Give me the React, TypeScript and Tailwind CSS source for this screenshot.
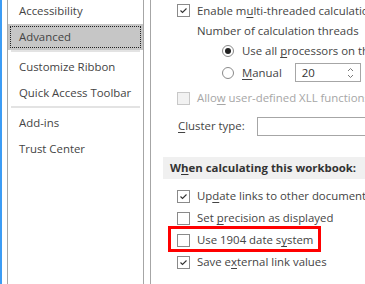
import React from "react";

const U = ({ children }: { children: React.ReactNode }) => (
  <span className="underline decoration-1 underline-offset-[2px]">{children}</span>
);

function CheckBox({ checked, disabled }: { checked?: boolean; disabled?: boolean }) {
  return (
    <div
      className={
        "w-[13px] h-[13px] shrink-0 border flex items-center justify-center " +
        (disabled ? "border-[#c8c8c8] bg-[#f2f2f2]" : "border-[#8a8a8a] bg-white")
      }
    >
      {checked && (
        <svg width="11" height="11" viewBox="0 0 11 11">
          <path d="M2.5 5.5 L4.5 7.5 L8.5 3.5" fill="none" stroke="#333" strokeWidth="1.1" />
        </svg>
      )}
    </div>
  );
}

function Radio({ checked }: { checked?: boolean }) {
  return (
    <div className="w-[12px] h-[12px] shrink-0 rounded-full border border-[#8a8a8a] bg-white flex items-center justify-center">
      {checked && <div className="w-[6px] h-[6px] rounded-full bg-[#222]" />}
    </div>
  );
}

function SideItem({ label, selected }: { label: string; selected?: boolean }) {
  if (selected) {
    return (
      <div className="h-[26px] bg-[#c6c6c6] p-[2px]">
        <div className="h-full border border-dotted border-[#222] flex items-center pl-[8px]">{label}</div>
      </div>
    );
  }
  return <div className="h-[26px] flex items-center pl-[11px]">{label}</div>;
}

function Sep() {
  return (
    <div className="h-[4px] px-[3px]">
      <div className="h-[2px] bg-[#e3e3e3]" />
    </div>
  );
}

function CheckRow({
  checked,
  children,
  disabled,
}: {
  checked?: boolean;
  children: React.ReactNode;
  disabled?: boolean;
}) {
  return (
    <div className={"h-[22px] flex items-center gap-[7px] pl-[26px] " + (disabled ? "text-[#a6a6a6]" : "")}>
      <CheckBox checked={checked} disabled={disabled} />
      <span>{children}</span>
    </div>
  );
}

export default function App() {
  return (
    <div className="w-[365px] h-[284px] overflow-hidden bg-white flex font-['Open_Sans',sans-serif] text-[11.4px] text-[#444] whitespace-nowrap leading-none">
      <div className="w-[2px] shrink-0 bg-[#3c9cf5]" />
      <div className="w-[5px] shrink-0" />
      <div className="w-[137px] shrink-0 border-x border-[#a6a6a6]">
        <div className="-mt-[2px]">
          <SideItem label="Accessibility" />
          <SideItem label="Advanced" selected />
          <Sep />
          <SideItem label="Customize Ribbon" />
          <SideItem label="Quick Access Toolbar" />
          <Sep />
          <SideItem label="Add-ins" />
          <SideItem label="Trust Center" />
        </div>
      </div>
      <div className="w-[6px] shrink-0" />
      <div className="flex-1 border-l border-[#a6a6a6] overflow-hidden">
        <div className="h-[21px] flex items-center gap-[7px] pl-[26px]">
          <CheckBox checked />
          <span>
            Enable m<U>u</U>lti-threaded calculation
          </span>
        </div>
        <div className="h-[20px] flex items-center pl-[46px]">Number of calculation threads</div>
        <div className="h-[20px] flex items-center gap-[8px] pl-[71px]">
          <Radio checked />
          <span>
            Use all <U>p</U>rocessors on this computer: 20
          </span>
        </div>
        <div className="h-[23px] flex items-center pl-[71px]">
          <Radio />
          <span className="ml-[8px]">
            <U>M</U>anual
          </span>
          <div className="ml-[13px] w-[66px] h-[19px] border border-[#a6a6a6] flex items-center justify-between pl-[6px] pr-[6px] text-[#333]">
            <span>20</span>
            <svg width="7" height="12" viewBox="0 0 7 12">
              <path d="M1 4 L3.5 1.5 L6 4" fill="none" stroke="#777" strokeWidth="1" />
              <path d="M1 8 L3.5 10.5 L6 8" fill="none" stroke="#777" strokeWidth="1" />
            </svg>
          </div>
        </div>
        <div className="h-[28px] flex items-center">
          <div className="w-full">
            <CheckRow disabled>
              Allo<U>w</U> user-defined XLL functions to run on a compute cluster
            </CheckRow>
          </div>
        </div>
        <div className="h-[28px] flex items-center pl-[27px]">
          <span className="w-[79px]">
            <U>C</U>luster type:
          </span>
          <div className="flex-1 h-[19px] border border-[#a6a6a6] border-r-0" />
        </div>
        <div className="mt-[17px] ml-[12px] h-[22px] bg-[#f0f0f0] flex items-center pl-[7px] font-bold text-[#333]">
          <span>
            W<U>h</U>en calculating this workbook:
          </span>
        </div>
        <div className="mt-[6px]">
          <CheckRow checked>
            Up<U>d</U>ate links to other documents
          </CheckRow>
          <CheckRow>
            Set <U>p</U>recision as displayed
          </CheckRow>
          <div className="relative">
            <CheckRow>
              Use 1904 date s<U>y</U>stem
            </CheckRow>
            <div className="absolute left-[17px] top-[-3px] w-[153px] h-[26px] border-[3px] border-[#f00]" />
          </div>
          <CheckRow checked>
            Save e<U>x</U>ternal link values
          </CheckRow>
        </div>
      </div>
    </div>
  );
}
